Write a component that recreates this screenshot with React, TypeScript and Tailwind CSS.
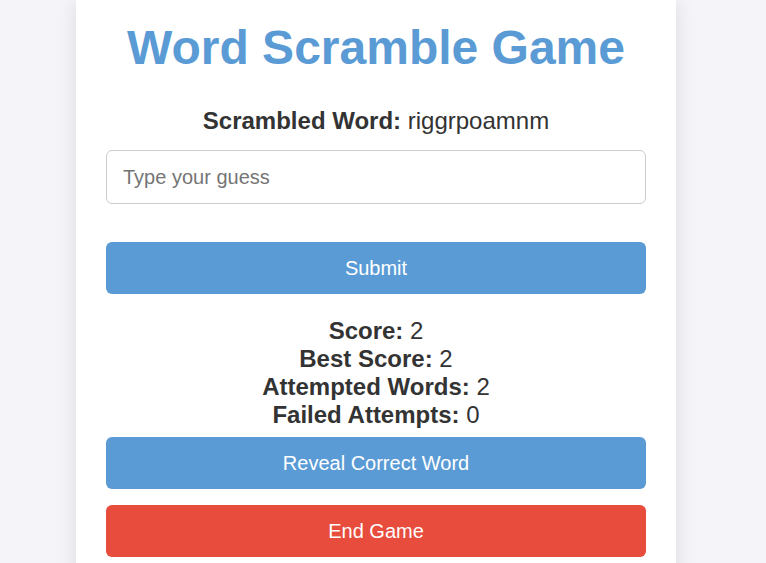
import React, { useState } from 'react';

const App = () => {
  const [guess, setGuess] = useState('');
  const stats = [
    { label: 'Score:', value: 2 },
    { label: 'Best Score:', value: 2 },
    { label: 'Attempted Words:', value: 2 },
    { label: 'Failed Attempts:', value: 0 },
  ];

  return (
    <div
      className="min-h-[563px] overflow-hidden bg-[#f4f4f9] text-[#333]"
      style={{ fontFamily: '"Liberation Sans", Arial, sans-serif' }}
    >
      <div className="ml-[76px] w-[600px] bg-white px-[30px] pt-[20px] pb-[30px] shadow-[0_0_20px_rgba(0,0,0,0.1)]">
        <h1 className="text-center text-[48px] font-bold leading-[56px] text-[#5a9bd5]">
          Word Scramble Game
        </h1>
        <p className="mt-[31px] text-center text-[24px] leading-[28px]">
          <span className="font-bold">Scrambled Word:</span> riggrpoamnm
        </p>
        <input
          value={guess}
          onChange={(e) => setGuess(e.target.value)}
          placeholder="Type your guess"
          className="mt-[15px] block h-[54px] w-full rounded-[6px] border border-[#ccc] px-[16px] text-[20px] text-[#333] outline-none placeholder:text-[#757575]"
        />
        <button className="mt-[38px] block h-[52px] w-full rounded-[6px] bg-[#5a9bd5] text-[20px] text-white">
          Submit
        </button>
        <div className="mt-[23px] text-center text-[24px] leading-[28px]">
          {stats.map((s) => (
            <div key={s.label}>
              <span className="font-bold">{s.label}</span> {s.value}
            </div>
          ))}
        </div>
        <button className="mt-[8px] block h-[52px] w-full rounded-[6px] bg-[#5a9bd5] text-[20px] text-white">
          Reveal Correct Word
        </button>
        <button className="mt-[16px] block h-[52px] w-full rounded-[6px] bg-[#e74c3c] text-[20px] text-white">
          End Game
        </button>
      </div>
    </div>
  );
};

export default App;
